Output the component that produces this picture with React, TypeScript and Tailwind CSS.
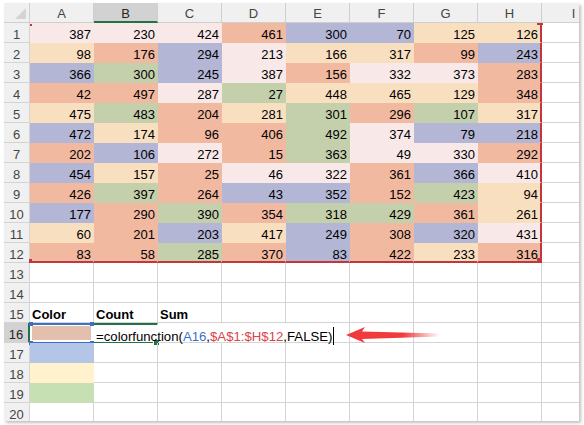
import type { ReactNode } from "react";

const FILL: Record<string, string> = {
  P: "bg-[#f8e8e8]",
  O: "bg-[#f8dfc0]",
  S: "bg-[#f1b9a0]",
  L: "bg-[#b3b6d5]",
  G: "bg-[#c4cfab]",
};

const VALUES = [
  [387, 230, 424, 461, 300, 70, 125, 126],
  [98, 176, 294, 213, 166, 317, 99, 243],
  [366, 300, 245, 387, 156, 332, 373, 283],
  [42, 497, 287, 27, 448, 465, 129, 348],
  [475, 483, 204, 281, 301, 296, 107, 317],
  [472, 174, 96, 406, 492, 374, 79, 218],
  [202, 106, 272, 15, 363, 49, 330, 292],
  [454, 157, 25, 46, 322, 361, 366, 410],
  [426, 397, 264, 43, 352, 152, 423, 94],
  [177, 290, 390, 354, 318, 429, 361, 261],
  [60, 201, 203, 417, 249, 308, 320, 431],
  [83, 58, 285, 370, 83, 422, 233, 316],
];

const COLORS = [
  "PPPSLLOO",
  "OSLPOOSL",
  "LGLPSPPS",
  "SSPGOOOS",
  "OGSOGSGO",
  "LOSSGPLL",
  "SLPSGPPS",
  "LOSPPSLP",
  "SGSLLSGO",
  "LSGSGGSO",
  "OSLOLSLP",
  "SSGSLSOS",
];

const COLS = ["A", "B", "C", "D", "E", "F", "G", "H", "I"];

function Handle({ className }: { className: string }) {
  return <span className={`absolute ${className}`} />;
}

function RowHead({ n, active }: { n: number; active?: boolean }) {
  return (
    <div
      className={`w-[26px] h-[20px] shrink-0 border-b border-[#d4d4d4] text-center leading-[23px] ${
        active
          ? "bg-[#d2d2d2] border-r-2 border-r-[#217346] text-[#262626]"
          : "bg-[#f0f0f0] border-r text-[#444]"
      }`}
    >
      {n}
    </div>
  );
}

function Cell({
  children,
  className = "",
}: {
  children?: ReactNode;
  className?: string;
}) {
  return (
    <div
      className={`relative w-[64px] h-[20px] shrink-0 border-r border-b leading-[23px] whitespace-nowrap ${className}`}
    >
      {children}
    </div>
  );
}

function HeaderRow() {
  return (
    <div className="flex">
      <div className="relative w-[26px] h-[20px] shrink-0 bg-[#f0f0f0] border-r border-b border-[#cfcfcf]">
        <svg
          className="absolute right-[3px] bottom-[3px]"
          width="11"
          height="11"
          viewBox="0 0 11 11"
        >
          <polygon points="11,0 11,11 0,11" fill="#d4d4d4" />
        </svg>
      </div>
      {COLS.map((c) => (
        <div
          key={c}
          className={`w-[64px] h-[20px] shrink-0 border-r border-b border-[#cfcfcf] text-center leading-[21px] ${
            c === "B"
              ? "bg-[#d2d2d2] border-b-2 border-b-[#217346] text-[#262626]"
              : "bg-[#f0f0f0] text-[#444]"
          }`}
        >
          {c}
        </div>
      ))}
    </div>
  );
}

function DataRow({ n }: { n: number }) {
  const vals = VALUES[n - 1];
  const cols = COLORS[n - 1];
  const last = n === 12;
  return (
    <div className="flex">
      <RowHead n={n} />
      {vals.map((v, i) => (
        <Cell
          key={i}
          className={`border-transparent text-right pr-[2px] ${FILL[cols[i]]} ${
            i === 7 ? "border-r-2 border-r-[#c3363b]" : ""
          } ${last ? "border-b-2 border-b-[#c3363b]" : ""}`}
        >
          {v}
          {n === 1 && i === 0 && (
            <Handle className="left-0 top-[1px] w-[2px] h-[2px] bg-[#c3363b]" />
          )}
          {n === 1 && i === 7 && (
            <Handle className="right-[-3px] top-0 w-[6px] h-[2px] bg-[#c3363b]" />
          )}
          {last && i === 0 && (
            <Handle className="left-[-1px] bottom-[-2px] w-[3px] h-[4px] bg-[#c3363b]" />
          )}
          {last && i === 7 && (
            <Handle className="right-[-2px] bottom-[-2px] w-[5px] h-[5px] bg-[#c3363b]" />
          )}
        </Cell>
      ))}
      <Cell className="border-[#d4d4d4]" />
    </div>
  );
}

function BlankRow({
  n,
  first,
  active,
  children,
}: {
  n: number;
  first?: ReactNode;
  active?: boolean;
  children?: ReactNode;
}) {
  return (
    <div className="flex">
      <RowHead n={n} active={active} />
      {first ?? <Cell className="border-[#d4d4d4]" />}
      {children ??
        COLS.slice(1).map((c) => <Cell key={c} className="border-[#d4d4d4]" />)}
    </div>
  );
}

export default function App() {
  return (
    <div className="relative w-[584px] h-[425px] bg-white overflow-hidden font-['Liberation_Sans',Arial,sans-serif] text-[13px] text-black">
      <div className="relative ml-[4px] mt-[3px] w-[575px] h-[418px] overflow-hidden bg-white shadow-[2px_2px_3px_rgba(0,0,0,0.25)]">
        <HeaderRow />
        {VALUES.map((_, i) => (
          <DataRow key={i} n={i + 1} />
        ))}
        <BlankRow n={13} />
        <BlankRow n={14} />
        <BlankRow
          n={15}
          first={
            <Cell className="border-[#d4d4d4] font-bold pl-[2px]">Color</Cell>
          }
        >
          <Cell className="border-[#d4d4d4] font-bold pl-[2px]">Count</Cell>
          <Cell className="border-[#d4d4d4] font-bold pl-[2px]">Sum</Cell>
          {COLS.slice(3).map((c) => (
            <Cell key={c} className="border-[#d4d4d4]" />
          ))}
        </BlankRow>
        <BlankRow
          n={16}
          active
          first={
            <Cell className="border-transparent border-y-2 border-y-[#3f6fc4] bg-white pt-[1px] pl-[2px] pr-[2px]">
              <div className="h-[14px] bg-[#e2c0ad]" />
              <Handle className="left-[-1px] top-[-3px] w-[4px] h-[4px] bg-[#3f6fc4]" />
              <Handle className="right-[-1px] top-[-3px] w-[4px] h-[4px] bg-[#3f6fc4]" />
              <Handle className="left-[-1px] bottom-[-3px] w-[4px] h-[4px] bg-[#3f6fc4]" />
              <Handle className="right-[-1px] bottom-[-3px] w-[4px] h-[4px] bg-[#3f6fc4]" />
            </Cell>
          }
        >
          <Cell className="border-y-2 border-y-[#217346] border-r-transparent pl-[2px] leading-[21px] text-[13.2px]">
            <span className="relative z-10">
              =colorfunction(
              <span className="text-[#3b6fc6]">A16</span>,
              <span className="text-[#d9434b]">$A$1:$H$12</span>
              ,FALSE)
              <span className="inline-block align-[-4px] ml-[1px] w-[1px] h-[18px] bg-black" />
            </span>
            <Handle className="right-[-3px] bottom-[-4px] w-[7px] h-[7px] bg-[#217346] border border-white" />
          </Cell>
          <Cell className="border-b-[#d4d4d4] border-r-transparent" />
          <Cell className="border-b-[#d4d4d4] border-r-transparent" />
          {COLS.slice(4).map((c) => (
            <Cell key={c} className="border-[#d4d4d4]" />
          ))}
        </BlankRow>
        <BlankRow
          n={17}
          first={<Cell className="border-transparent bg-[#b4c6e7]" />}
        />
        <BlankRow
          n={18}
          first={<Cell className="border-transparent bg-[#fff2cc]" />}
        />
        <BlankRow
          n={19}
          first={<Cell className="border-transparent bg-[#c6e0b4]" />}
        />
        <BlankRow n={20} />
      </div>

      {/* arrow pointing at the formula */}
      <svg
        className="absolute left-[344px] top-[325px]"
        width="100"
        height="20"
        viewBox="0 0 100 20"
      >
        <defs>
          <linearGradient id="arrowFade" x1="0" y1="0" x2="1" y2="0">
            <stop offset="0" stopColor="#f03a3c" />
            <stop offset="0.6" stopColor="#f03a3c" />
            <stop offset="1" stopColor="#f03a3c" stopOpacity="0" />
          </linearGradient>
        </defs>
        <polygon
          points="2,10 21,2 18,6.5 96,8.5 96,11.5 18,14 21,18"
          fill="url(#arrowFade)"
        />
      </svg>
    </div>
  );
}
